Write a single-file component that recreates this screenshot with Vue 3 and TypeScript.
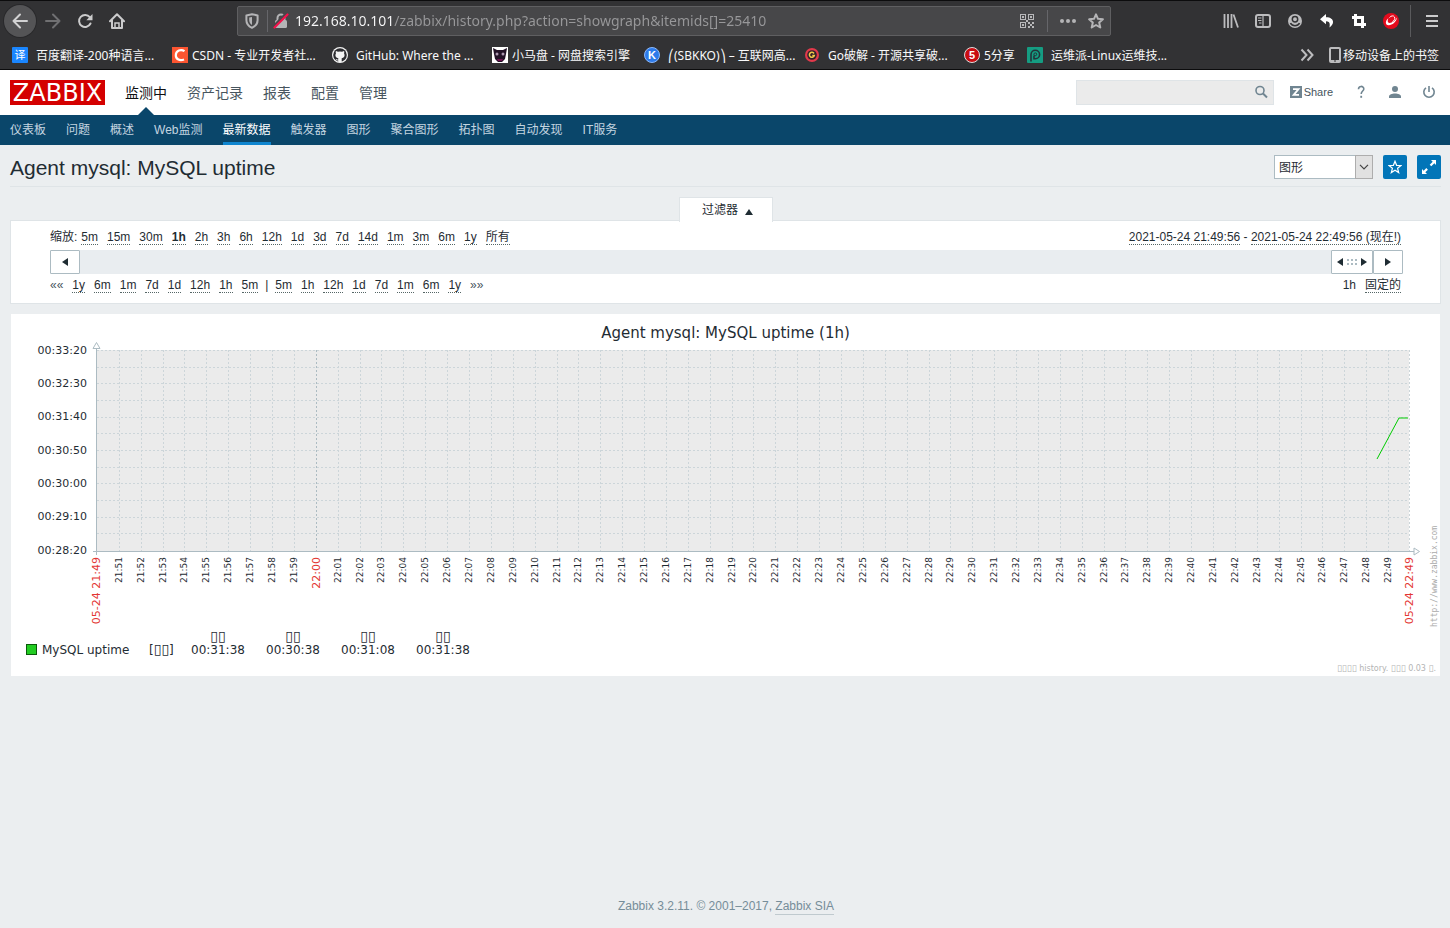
<script setup lang="ts">
import { computed, onBeforeUnmount, onMounted, ref } from 'vue'

interface Bookmark { label: string; icon: string; size: string; spaced?: boolean }

const bookmarks: Bookmark[] = [
  { label: '百度翻译-200种语言...', icon: 'translate', size: 'full', spaced: true },
  { label: 'CSDN - 专业开发者社...', icon: 'csdn', size: 'full' },
  { label: 'GitHub: Where the ...', icon: 'github', size: 'full', spaced: true },
  { label: '小马盘 - 网盘搜索引擎', icon: 'pony', size: 'medium' },
  { label: '⎛(SBKKO)⎞ – 互联网高...', icon: 'k', size: 'full', spaced: true },
  { label: 'Go破解 - 开源共享破...', icon: 'go', size: 'full', spaced: true },
  { label: '5分享', icon: 'five', size: 'small' },
  { label: '运维派-Linux运维技...', icon: 'pai', size: 'full', spaced: true },
]

const mainMenu = ['监测中', '资产记录', '报表', '配置', '管理']
const subMenu = ['仪表板', '问题', '概述', 'Web监测', '最新数据', '触发器', '图形', '聚合图形', '拓扑图', '自动发现', 'IT服务']
const zooms = ['5m', '15m', '30m', '1h', '2h', '3h', '6h', '12h', '1d', '3d', '7d', '14d', '1m', '3m', '6m', '1y', '所有']
const back = ['1y', '6m', '1m', '7d', '1d', '12h', '1h', '5m']
const forward = ['5m', '1h', '12h', '1d', '7d', '1m', '6m', '1y']

const url = ref('192.168.10.101/zabbix/history.php?action=showgraph&itemids[]=25410')
const search = ref('')
const view = ref('图形')

const holder = ref<HTMLElement | null>(null)
const width = ref(1429)
let observer: ResizeObserver | undefined
onMounted(() => {
  if (!holder.value) return
  width.value = holder.value.clientWidth
  observer = new ResizeObserver(() => {
    if (holder.value) width.value = holder.value.clientWidth
  })
  observer.observe(holder.value)
})
onBeforeUnmount(() => observer?.disconnect())

const left = 85
const top = 36
const bottom = 237
const right = computed(() => width.value - 31)
const xAt = (seconds: number) => left + Math.floor((seconds / 3600) * (right.value - left))

const minutes = computed(() =>
  Array.from({ length: 59 }, (_, i) => {
    const total = 21 * 60 + 51 + i
    const hour = Math.floor(total / 60)
    const minute = String(total % 60).padStart(2, '0')
    return { label: `${hour}:${minute}`, x: xAt(64 + i * 60), major: total % 60 === 0 }
  }),
)
const rows = Array.from({ length: 12 }, (_, i) => top + Math.round((i * 200) / 12))
const values = ['00:33:20', '00:32:30', '00:31:40', '00:30:50', '00:30:00', '00:29:10', '00:28:20']
const series = computed(() => {
  const end = right.value
  return `${end - 32},145 ${end - 10},104 ${end - 1},104`
})
const stats = ['00:31:38', '00:30:38', '00:31:08', '00:31:38']
</script>

<template>
  <div class="window">
    <header class="browser">
      <div class="toolbar">
        <button class="tool round" aria-label="后退"><svg width="16" height="16" viewBox="0 0 16 16"><path d="M15 8H1.5M8 1.5 1.5 8 8 14.5" fill="none" stroke="#d2d2d3" stroke-width="2" stroke-linecap="round" stroke-linejoin="round" /></svg></button>
        <button class="tool" aria-label="前进"><svg width="16" height="16" viewBox="0 0 16 16"><path d="M1 8h13.5M8 1.5 14.5 8 8 14.5" fill="none" stroke="#707072" stroke-width="2" stroke-linecap="round" stroke-linejoin="round" /></svg></button>
        <button class="tool" aria-label="刷新"><svg width="16" height="16" viewBox="0 0 16 16"><path d="M12.800 4.200A6 6 0 1 0 13.500 10.500" fill="none" stroke="#cbcbcc" stroke-width="2" stroke-linecap="round" /><path d="M15.500 1v6.200H9.300z" fill="#cbcbcc" /></svg></button>
        <button class="tool" aria-label="主页"><svg width="16" height="16" viewBox="0 0 16 16"><path d="M1 8.300 8 1.200l7 7.100M3 7v7.900h10V7" fill="none" stroke="#cbcbcc" stroke-width="2" stroke-linecap="round" stroke-linejoin="round" /><path d="M6 15v-5h4v5" fill="none" stroke="#cbcbcc" stroke-width="1.500" /></svg></button>
        <div class="urlbar">
          <svg class="shield" width="14" height="16" viewBox="0 0 14 16"><path d="M7 1.200 12.600 2.400v4.800c0 3.600-2.400 6.100-5.600 7.600-3.200-1.500-5.600-4-5.600-7.600V2.400z" fill="none" stroke="#b4b4b6" stroke-width="2" stroke-linejoin="round" /><path d="M7 4v8C5 10.700 4.200 9 4.200 7V4.500z" fill="#b4b4b6" /></svg>
          <i class="rule"></i>
          <svg class="lock" width="16" height="16" viewBox="0 0 16 16"><path d="M4.500 8V5a3.500 3.500 0 0 1 7 0v3" fill="none" stroke="#b4b4b6" stroke-width="2" /><rect x="2" y="7" width="12" height="8" rx="1.500" fill="#b4b4b6" /><path d="M1 13 13 1" stroke="#474749" stroke-width="3" /><path d="M1.500 14.500 14.500 1.500" stroke="#f5114b" stroke-width="2.200" stroke-linecap="round" /></svg>
          <input v-model="url" class="address" type="text" aria-label="地址">
          <button class="inbar qr" aria-label="二维码"><svg width="14" height="14" viewBox="0 0 14 14" shape-rendering="crispEdges" fill="#b8b8ba"><path fill-rule="evenodd" d="M0 0h6v6H0zM1 1v4h4V1zM8 0h6v6H8zM9 1v4h4V1zM0 8h6v6H0zM1 9v4h4V9z" /><path d="M2 2h2v2H2zM10 2h2v2h-2zM2 10h2v2H2zM8 8h2v2H8zM12 8h2v2h-2zM10 10h2v2h-2zM8 12h2v2H8zM12 12h2v2h-2zM6 6h2v2H6z" /></svg></button>
          <i class="rule"></i>
          <button class="inbar dots" aria-label="页面操作"><svg width="16" height="16" viewBox="0 0 16 16" fill="#b4b4b6"><circle cx="2" cy="8" r="2" /><circle cx="8" cy="8" r="2" /><circle cx="14" cy="8" r="2" /></svg></button>
          <button class="inbar" aria-label="收藏"><svg width="16" height="16" viewBox="0 0 16 16"><path d="m8 1.300 2 4.500 4.900.5-3.700 3.300 1.100 4.900L8 12l-4.300 2.500 1.100-4.900L1.100 6.300 6 5.800z" fill="none" stroke="#b4b4b6" stroke-width="2" stroke-linejoin="round" /></svg></button>
        </div>
        <button class="tool" aria-label="书库"><svg width="16" height="16" viewBox="0 0 16 16"><path d="M1.500 1v14M5 1v14M8.500 1v14M10.500 1.500 15 14.500" stroke="#bcbcbe" stroke-width="1.800" fill="none" /></svg></button>
        <button class="tool" aria-label="侧栏"><svg width="16" height="16" viewBox="0 0 16 16"><rect x="1" y="2" width="14" height="12" rx="2" fill="none" stroke="#bcbcbe" stroke-width="2" /><path d="M8 2v12M3 5h3.500M3 7.500h3.500M4 10h2.500" stroke="#bcbcbe" stroke-width="1.200" fill="none" /></svg></button>
        <button class="tool" aria-label="账户"><svg width="16" height="16" viewBox="0 0 16 16"><circle cx="8" cy="8" r="7" fill="#bcbcbe" /><circle cx="8" cy="6.200" r="2.700" fill="#bcbcbe" stroke="#323234" stroke-width="1.500" /><path d="M3.400 10.200c2 3.400 7.200 3.400 9.200 0" fill="none" stroke="#323234" stroke-width="1.600" /></svg></button>
        <button class="tool" aria-label="撤销"><svg width="16" height="16" viewBox="0 0 16 16"><path d="M7 1 1 6.200 7 11.300V8.200c3 0 4.500 1.300 3.400 6.300 5.800-4 4.600-10.300-3.400-10.300z" fill="#fff" /></svg></button>
        <button class="tool" aria-label="截图"><svg width="16" height="16" viewBox="0 0 16 16"><path d="M4.500 1v10.500H15M1 4.500h10.500V15" fill="none" stroke="#fff" stroke-width="3" /></svg></button>
        <button class="tool" aria-label="扩展"><svg width="16" height="16" viewBox="0 0 16 16"><circle cx="8" cy="8" r="8" fill="#e40b1d" /><path d="M5.500 5C2 8 2 12 5.500 12.200c3.500.2 8-3.200 8.500-7.700-2 3.500-5 5.600-7.500 5.500C4.500 9.900 4.300 7.500 5.500 5z" fill="#fff" /><path d="M6.500 4.500c1.500-1.800 4-2.300 5-.5s-.5 3.500-2 4.500" fill="none" stroke="#fff" stroke-width="1" /></svg></button>
        <i class="edge"></i>
        <button class="tool" aria-label="菜单"><svg width="14" height="14" viewBox="0 0 14 14"><path d="M1 2h12M1 7h12M1 12h12" stroke="#cbcbcc" stroke-width="2" /></svg></button>
      </div>
      <nav class="bookmarks" aria-label="书签">
        <a v-for="b in bookmarks" :key="b.label" href="#" class="bookmark" :class="[b.size, { spaced: b.spaced }]">
          <svg width="16" height="16" viewBox="0 0 16 16">
            <template v-if="b.icon === 'translate'"><rect width="16" height="16" rx="1" fill="#1a86ff" /><text x="8" y="12" text-anchor="middle" class="glyph">译</text></template>
            <template v-else-if="b.icon === 'csdn'"><rect width="16" height="16" fill="#fc5531" /><path d="M12.500 4.200C9 1.800 3.800 3.600 3.800 8.200c0 4.200 4.200 5.900 8.200 4.200" fill="none" stroke="#fff" stroke-width="2.200" /></template>
            <template v-else-if="b.icon === 'github'"><circle cx="8" cy="8" r="8" fill="#f4f4f4" /><circle cx="8" cy="8" r="6.800" fill="#2c2c30" /><path d="M4 4l2 .8a7 7 0 0 1 4 0L12 4c.5 1 .3 1.800 0 2.300 1.500 3-.3 4.800-2.300 5V15H6.300v-1.500c-1.800.3-1.800-1-2.800-1.500 1.300-.2 1.600 1 2.800.6v-1.300c-2-.2-3.800-2-2.300-5C3.700 5.800 3.500 5 4 4z" fill="#f4f4f4" /></template>
            <template v-else-if="b.icon === 'pony'"><rect width="16" height="16" fill="#fff" /><path d="M1 1l4 2h6l4-2-1 6-1 5-3 3H6l-3-3-1-5z" fill="#211026" /><circle cx="5" cy="7" r="1.500" fill="#a995ae" /><circle cx="11" cy="7" r="1.500" fill="#a995ae" /><path d="M5 12h6l-1 2H6z" fill="#6d1450" /></template>
            <template v-else-if="b.icon === 'k'"><circle cx="8" cy="8" r="7.500" fill="#2e7bea" stroke="#8bb8fa" /><text x="8" y="12" text-anchor="middle" class="letter">K</text></template>
            <template v-else-if="b.icon === 'go'"><circle cx="8" cy="8" r="7" fill="#e2394b" /><circle cx="8" cy="8" r="4.800" fill="#322129" /><path d="M10 6.500a2.500 2.500 0 1 0 .3 2H8.300" fill="none" stroke="#f0c84a" stroke-width="1.500" /></template>
            <template v-else-if="b.icon === 'five'"><circle cx="8" cy="8" r="7.500" fill="#c90d12" stroke="#ddd" /><text x="8" y="12" text-anchor="middle" class="letter">5</text></template>
            <template v-else><rect width="16" height="16" rx="1" fill="#159d82" /><path d="M4 14.500V7.500a4.300 4.300 0 1 1 4.300 4.300H7V8.500" fill="none" stroke="#23333b" stroke-width="1.600" /><circle cx="8.300" cy="7.300" r="1.400" fill="none" stroke="#23333b" /></template>
          </svg>
          <span>{{ b.label }}</span>
        </a>
        <button class="more" aria-label="更多书签"><svg width="14" height="14" viewBox="0 0 14 14"><path d="m1.500 1.500 5 5.500-5 5.500M7.500 1.500l5 5.500-5 5.500" fill="none" stroke="#bcbcbe" stroke-width="2" /></svg></button>
        <a href="#" class="mobile"><svg width="12" height="16" viewBox="0 0 12 16"><rect x="1" y="1" width="10" height="14" rx="1" fill="none" stroke="#bcbcbe" stroke-width="2" /><path d="M1 14h10" stroke="#bcbcbe" stroke-width="2" /><path d="M5 14h2" stroke="#323234" /></svg><span>移动设备上的书签</span></a>
      </nav>
    </header>

    <div class="app">
      <div class="head">
        <a href="#" class="logo">ZABBIX</a>
        <nav class="main" aria-label="主菜单">
          <a v-for="(m, i) in mainMenu" :key="m" href="#" :class="{ current: i === 0 }">{{ m }}</a>
        </nav>
        <form class="search" @submit.prevent>
          <input v-model="search" type="text" aria-label="搜索">
          <button type="submit" aria-label="搜索"><svg width="14" height="14" viewBox="0 0 14 14"><circle cx="6" cy="5.500" r="4" fill="none" stroke="#708591" stroke-width="1.600" /><path d="m9 8.500 4 4" stroke="#708591" stroke-width="2" /></svg></button>
        </form>
        <a href="#" class="share"><svg width="12" height="12" viewBox="0 0 12 12"><rect width="12" height="12" fill="#708591" /><path d="M3 3.200h5.500L3.700 8.800H9" fill="none" stroke="#fff" stroke-width="1.800" /></svg>Share</a>
        <a href="#" class="user" aria-label="帮助"><svg width="14" height="14" viewBox="0 0 14 14"><path d="M4.500 4.200C4.500.5 9.800.6 9.800 3.900 9.800 6 7.200 6.200 7.200 9" fill="none" stroke="#708591" stroke-width="1.600" /><path d="M6.300 10.800h1.800v2H6.300z" fill="#708591" /></svg></a>
        <a href="#" class="user" aria-label="用户"><svg width="14" height="14" viewBox="0 0 14 14" fill="#708591"><circle cx="7" cy="4" r="3" /><path d="M1 13V11.500C1 9.500 4 8.500 7 8.500s6 1 6 3V13z" /></svg></a>
        <a href="#" class="user" aria-label="退出"><svg width="14" height="14" viewBox="0 0 14 14"><path d="M4 2.800a5.200 5.200 0 1 0 6 0M7 1v6" fill="none" stroke="#708591" stroke-width="1.600" /></svg></a>
      </div>
      <nav class="sub" aria-label="子菜单">
        <a v-for="s in subMenu" :key="s" href="#" :class="{ current: s === '最新数据' }">{{ s }}</a>
      </nav>

      <main>
        <div class="title">
          <h1>Agent mysql: MySQL uptime</h1>
          <label class="picker">
            <select v-model="view" aria-label="查看方式"><option>图形</option><option>值</option></select>
            <span class="drop"><svg width="10" height="6" viewBox="0 0 10 6"><path d="m1 .8 4 4 4-4" fill="none" stroke="#444" stroke-width="1.200" /></svg></span>
          </label>
          <button class="square" aria-label="收藏"><svg width="14" height="14" viewBox="0 0 14 14"><path d="m7 1.200 1.600 4.100 4.400.2-3.400 2.800 1.100 4.300L7 10.200l-3.700 2.400 1.100-4.300L1 5.500l4.400-.2z" fill="none" stroke="#fff" stroke-width="1.200" /></svg></button>
          <button class="square" aria-label="全屏"><svg width="16" height="16" viewBox="0 0 16 16"><path d="M10 1h5v5l-1.700-1.700-3 3-1.600-1.600 3-3zM1 15v-5l1.700 1.700 2.600-2.600 1.600 1.600-2.600 2.600L6 15z" fill="#fff" /></svg></button>
        </div>

        <div class="tabline"><button class="tab">过滤器 <svg width="8" height="6" viewBox="0 0 8 6"><path d="M4 0 8 6H0z" fill="#1f2c33" /></svg></button></div>

        <section class="filter">
          <div class="line">
            <div class="links"><span class="caption">缩放:</span><a v-for="z in zooms" :key="z" href="#" :class="{ strong: z === '1h' }">{{ z }}</a></div>
            <div class="dates"><a href="#">2021-05-24 21:49:56</a> - <a href="#">2021-05-24 22:49:56 (现在!)</a></div>
          </div>
          <div class="scroller">
            <button class="step" aria-label="向前"><svg width="6" height="8" viewBox="0 0 6 8"><path d="M6 0v8L0 4z" fill="#1f2c33" /></svg></button>
            <button class="handle" aria-label="时间范围"><svg width="30" height="8" viewBox="0 0 30 8"><path d="M6 0v8L0 4zM24 0v8l6-4z" fill="#1f2c33" /><path d="M10 1h2v2h-2zM14 1h2v2h-2zM18 1h2v2h-2zM10 5h2v2h-2zM14 5h2v2h-2zM18 5h2v2h-2z" fill="#acbbc2" /></svg></button>
            <button class="step" aria-label="向后"><svg width="6" height="8" viewBox="0 0 6 8"><path d="M0 0v8l6-4z" fill="#1f2c33" /></svg></button>
          </div>
          <div class="line">
            <div class="links"><span class="arrows">««</span><a v-for="b in back" :key="b" href="#">{{ b }}</a><span class="bar">|</span><a v-for="f in forward" :key="f" href="#">{{ f }}</a><span class="arrows">»»</span></div>
            <div class="links"><span>1h</span><a href="#">固定的</a></div>
          </div>
        </section>

        <section ref="holder" class="chart">
          <svg :width="width" height="362" role="img" aria-label="Agent mysql: MySQL uptime (1h)">
            <text :x="width / 2" y="24" text-anchor="middle" class="heading">Agent mysql: MySQL uptime (1h)</text>
            <g shape-rendering="crispEdges">
              <rect :x="left" :y="top" :width="right - left" :height="bottom - top" fill="#ebebeb" />
              <line v-for="y in rows" :key="y" :x1="left + 1" :x2="right" :y1="y + .5" :y2="y + .5" class="grid" />
              <line v-for="m in minutes" :key="m.label" :x1="m.x + .5" :x2="m.x + .5" :y1="top" :y2="bottom" class="grid" :class="{ major: m.major }" />
              <line :x1="right + .5" :x2="right + .5" :y1="top" :y2="bottom" class="grid" />
              <path :d="`M${left + .5} 34V241M${left - 3} 237.500H${right + 5}`" class="axis" />
            </g>
            <path :d="`M${left - 3} 34.500h7l-3.500 -6z`" class="tip" />
            <path :d="`M${right + 5} 234v7l5.500 -3.500z`" class="tip" />
            <polyline :points="series" class="series" />
            <text v-for="(v, i) in values" :key="v" x="76" :y="40 + Math.floor(i * 200 / 6)" text-anchor="end" class="value">{{ v }}</text>
            <text v-for="m in minutes" :key="m.label" :transform="`translate(${m.x + (m.major ? 4 : 3)} 243) rotate(-90)`" text-anchor="end" :class="m.major ? 'red' : 'minute'">{{ m.label }}</text>
            <text :transform="`translate(${left + 4} 243) rotate(-90)`" text-anchor="end" class="red">05-24 21:49</text>
            <text :transform="`translate(${right + 4} 243) rotate(-90)`" text-anchor="end" class="red">05-24 22:49</text>
            <text :transform="`translate(${width - 3} 313) rotate(-90)`" class="site">http://www.zabbix.com</text>
            <rect x="15.500" y="330.500" width="10" height="10" fill="#22cc22" stroke="#0a5a0a" />
            <text x="31" y="340" class="legend">MySQL uptime</text>
            <text x="138" y="340" class="legend">[<tspan class="box">▯▯</tspan>]</text>
            <g v-for="(s, i) in stats" :key="i">
              <text :x="207 + i * 75" y="327" text-anchor="middle" class="box">▯▯</text>
              <text :x="180 + i * 75" y="340" class="legend">{{ s }}</text>
            </g>
            <text :x="width - 4" y="357" text-anchor="end" class="note"><tspan class="tiny">▯▯▯▯</tspan> history. <tspan class="tiny">▯▯▯</tspan> 0.03 <tspan class="tiny">▯</tspan>.</text>
          </svg>
        </section>
      </main>
      <footer>Zabbix 3.2.11. © 2001–2017, <a href="#">Zabbix SIA</a></footer>
    </div>
  </div>
</template>

<style>
body { margin: 0; background: #ebeef0; }
</style>

<style scoped>
* { box-sizing: border-box; }
.window { display: flex; flex-direction: column; min-height: 100vh; font: 12px/16px "Liberation Sans", "Noto Sans CJK SC", sans-serif; color: #1f2c33; }
a { color: inherit; text-decoration: none; }
button { margin: 0; padding: 0; border: 0; background: none; font: inherit; color: inherit; display: flex; align-items: center; justify-content: center; cursor: pointer; }
svg { flex: none; display: block; }

.browser { height: 70px; background: #323234; border-top: 1px solid #0c0c0d; border-bottom: 1px solid #0c0c0d; font: 12px/16px "Noto Sans", "Noto Sans CJK SC", sans-serif; color: #f9f9fa; }
.toolbar { height: 40px; display: flex; align-items: center; padding: 0 2px 0 4px; }
.tool { width: 32px; height: 32px; flex: none; }
.round { margin-right: 1px; border-radius: 16px; background: #545456; box-shadow: 0 0 0 1px #29292b; }
.urlbar { flex: 1; min-width: 0; height: 30px; margin: 0 104px; display: flex; align-items: center; background: #474749; border: 1px solid #5f5f61; border-radius: 2px; }
.shield { margin: 0 8px 0 7px; }
.rule { width: 1px; height: 22px; background: #66666a; }
.lock { margin: 0 6px 0 5px; }
.address { flex: 1; min-width: 0; height: 24px; padding: 0; border: 0; outline: 0; font: 14px/24px "Noto Sans", sans-serif; color: #b1b1b3; background: linear-gradient(90deg, #f9f9fa 98px, #98989a 98px); background-clip: text; -webkit-background-clip: text; -webkit-text-fill-color: transparent; }
.inbar { width: 28px; height: 28px; }
.qr { margin-right: 6px; }
.dots { margin-left: 6px; }
.edge { width: 1px; height: 32px; margin: 0 5px 0 3px; background: #5a5a5c; }
.bookmarks { height: 28px; display: flex; align-items: center; padding: 0 11px 0 12px; white-space: nowrap; }
.bookmark { display: flex; align-items: center; gap: 4px; flex: 0 1 auto; min-width: 0; overflow: hidden; }
.bookmark span, .mobile span { line-height: 16px; padding-top: 2px; }
.spaced { gap: 8px; }
.full { width: 160px; }
.medium { width: 152px; }
.small { width: 63px; }
.glyph { font: 11px "Noto Sans CJK SC", sans-serif; fill: #fff; }
.letter { font: bold 11px "Liberation Sans", sans-serif; fill: #fff; }
.more { margin-left: auto; margin-right: 15px; }
.mobile { display: flex; align-items: center; gap: 2px; }

.app { flex: 1; display: flex; flex-direction: column; background: #ebeef0; }
.head { height: 45px; background: #fff; display: flex; align-items: center; padding: 0 14px 0 10px; }
.logo { width: 95px; height: 25px; background: #d40000; color: #fff; font: 24px/26px "DejaVu Sans", sans-serif; text-align: center; }
.main { display: flex; gap: 20px; margin: 0 auto 0 20px; align-self: stretch; }
.main a { font-size: 14px; line-height: 47px; height: 45px; color: #47555e; position: relative; }
.main .current { color: #0e1012; }
.main .current::after { content: ""; position: absolute; left: 50%; bottom: 0; margin-left: -8px; border: 8px solid transparent; border-top: 0; border-bottom-color: #0a466a; }
.search { display: flex; width: 198px; height: 25px; background: #ebebeb; border: 1px solid #dfe4e7; }
.search input { flex: 1; min-width: 0; border: 0; outline: 0; background: none; font: inherit; padding: 0 4px; }
.search button { width: 24px; height: 22px; }
.share { display: flex; align-items: center; gap: 2px; margin: 0 21px 2px 16px; font-size: 11px; color: #47555e; }
.user { margin: 0 0 2px 20px; }
.share + .user { margin-left: 0; }
.sub { height: 30px; background: #0a466a; display: flex; gap: 20px; padding: 0 10px; white-space: nowrap; }
.sub a { height: 30px; line-height: 31px; border-bottom: 3px solid transparent; color: #c4d5e0; }
.sub .current { color: #fff; border-color: #0f85cf; }

main { padding: 0 9px 0 10px; }
.title { height: 42px; display: flex; align-items: center; border-bottom: 1px solid #dfe4e7; gap: 10px; padding-top: 3px; }
h1 { flex: 1; margin: 0; padding-top: 1px; font-size: 21px; line-height: 24px; font-weight: normal; }
.picker { position: relative; width: 99px; height: 24px; }
select { appearance: none; width: 100%; height: 24px; padding: 2px 20px 0 4px; border: 1px solid #acbbc2; border-radius: 0; background: #fff; font: inherit; color: inherit; }
.drop { position: absolute; right: 0; top: 0; width: 18px; height: 24px; display: flex; align-items: center; justify-content: center; background: #e1e1e1; border: 1px solid #adadad; pointer-events: none; }
.square { width: 24px; height: 24px; background: #0275b8; border-radius: 2px; }

.tabline { display: flex; justify-content: center; margin-top: 10px; }
.tab { position: relative; z-index: 1; width: 94px; height: 25px; gap: 7px; padding-left: 4px; background: #fff; border: 1px solid #dfe4e7; border-bottom: 0; margin-bottom: -1px; }
.tab svg { margin-top: 4px; }
.filter { background: #fff; border: 1px solid #dfe4e7; padding: 8px 37px 10px 39px; margin-top: -1px; }
.line { display: flex; justify-content: space-between; height: 16px; padding-right: 2px; }
.links { display: flex; gap: 9px; }
.line a { height: 16px; border-bottom: 1px dotted #566; }
.dates a { display: inline-block; }
.caption { margin-right: -5px; }
.bar { margin: 0 -2px; }
.strong { font-weight: bold; }
.arrows { color: #47555e; }
.scroller { height: 24px; margin: 5px 0 3px; display: flex; background: #e9edf0; }
.step { width: 30px; background: #fff; border: 1px solid #acbbc2; border-radius: 1px; }
.handle { width: 42px; margin-left: auto; background: #fff; border: 1px solid #acbbc2; border-radius: 1px; }

.chart { margin: 10px 1px 0; background: #fff; overflow: hidden; }
.chart text { font-family: "DejaVu Sans", sans-serif; fill: #1f2c33; }
.heading { font-size: 15px; }
.value { font-size: 11px; }
.minute { font-size: 9px; }
.chart .red { font-size: 11px; fill: #e33734; }
.legend { font-size: 12px; }
.box { font-size: 14px; }
.tiny { font-size: 9px; }
.chart .note { font-size: 8px; fill: #b4b4b4; }
.chart .site { font-family: "DejaVu Sans Mono", monospace; font-size: 8px; fill: #aaa; }
.grid { stroke: #ccd5d9; stroke-dasharray: 2 2; }
.major { stroke: #acbbc2; }
.axis { stroke: #acbbc2; fill: none; }
.tip { stroke: #acbbc2; fill: #fff; }
.series { fill: none; stroke: #0c0; }

footer { margin-top: auto; padding: 0 0 13px 2px; text-align: center; color: #768d99; }
footer a { display: inline-block; border-bottom: 1px solid #c0cacf; }
</style>
